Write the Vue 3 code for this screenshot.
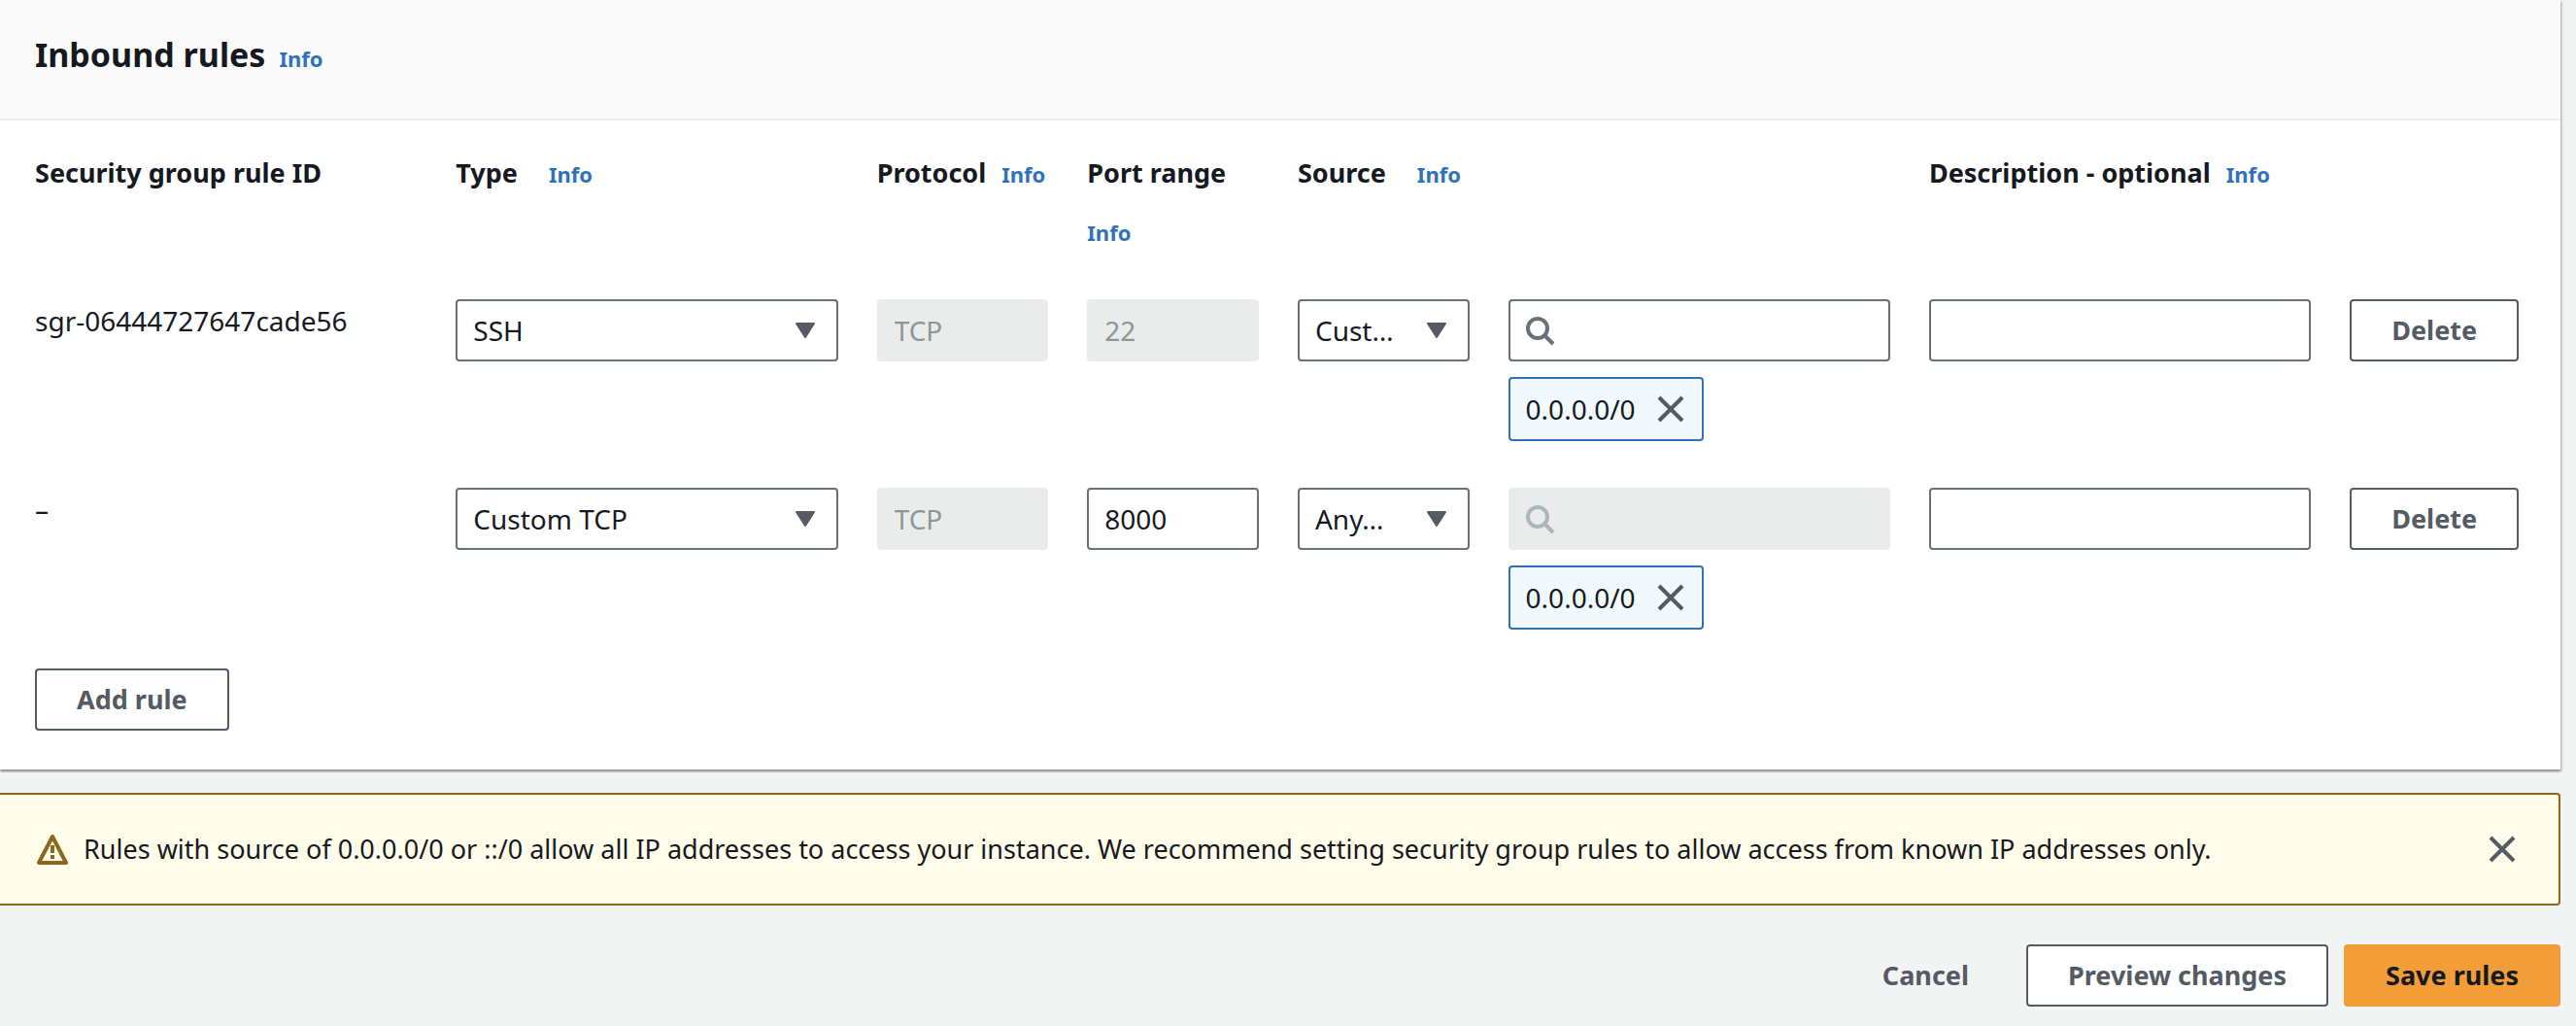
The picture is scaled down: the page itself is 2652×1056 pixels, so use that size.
<script setup>
import { ref } from 'vue'

const rules = ref([
  { id: 'sgr-06444727647cade56', type: 'SSH', protocol: 'TCP', port: '22', portLocked: true, source: 'Cust…', searchLocked: false, cidr: '0.0.0.0/0', description: '' },
  { id: '–', type: 'Custom TCP', protocol: 'TCP', port: '8000', portLocked: false, source: 'Any…', searchLocked: true, cidr: '0.0.0.0/0', description: '' },
])
</script>

<template>
  <main class="page">
    <section class="card">
      <header class="card-header">
        <h2 class="title">Inbound rules</h2>
        <a class="info" href="#">Info</a>
      </header>

      <div class="card-body">
        <table class="rules">
          <colgroup>
            <col v-for="n in 12" :key="n" />
          </colgroup>
          <thead>
            <tr>
              <th colspan="2" scope="col">Security group rule ID</th>
              <th colspan="2" scope="col"><span class="label wide">Type</span><a class="info" href="#">Info</a></th>
              <th scope="col"><span class="label">Protocol</span><a class="info" href="#">Info</a></th>
              <th scope="col" class="stacked"><span class="label">Port range</span><a class="info" href="#">Info</a></th>
              <th colspan="3" scope="col"><span class="label wide">Source</span><a class="info" href="#">Info</a></th>
              <th colspan="2" scope="col"><span class="label">Description - optional</span><a class="info" href="#">Info</a></th>
              <td></td>
            </tr>
          </thead>
          <tbody>
            <tr v-for="(rule, i) in rules" :key="i">
              <td colspan="2">{{ rule.id }}</td>
              <td colspan="2">
                <div class="field">
                  <select class="control" aria-label="Type">
                    <option>{{ rule.type }}</option>
                  </select>
                  <svg class="caret" viewBox="0 0 20 16" aria-hidden="true"><path d="M1 1H19L10 15Z" /></svg>
                </div>
              </td>
              <td><input v-model="rule.protocol" class="control" type="text" aria-label="Protocol" disabled /></td>
              <td><input v-model="rule.port" class="control" type="text" aria-label="Port range" :disabled="rule.portLocked" /></td>
              <td>
                <div class="field">
                  <select class="control" aria-label="Source type">
                    <option>{{ rule.source }}</option>
                  </select>
                  <svg class="caret" viewBox="0 0 20 16" aria-hidden="true"><path d="M1 1H19L10 15Z" /></svg>
                </div>
              </td>
              <td colspan="2">
                <div class="field">
                  <input class="control search" type="search" aria-label="Source" :disabled="rule.searchLocked" />
                  <svg class="glass" :class="{ muted: rule.searchLocked }" viewBox="0 0 32 32" aria-hidden="true">
                    <circle cx="14" cy="14" r="10" />
                    <path d="M21 21L30 30" />
                  </svg>
                </div>
                <div class="token">
                  <span>{{ rule.cidr }}</span>
                  <button class="icon-button" type="button" aria-label="Remove source">
                    <svg class="cross" viewBox="0 0 28 28" aria-hidden="true"><path d="M2 2L26 26M26 2L2 26" /></svg>
                  </button>
                </div>
              </td>
              <td colspan="2"><input v-model="rule.description" class="control" type="text" aria-label="Description" /></td>
              <td><button class="button" type="button">Delete</button></td>
            </tr>
          </tbody>
        </table>
        <button class="button" type="button">Add rule</button>
      </div>
    </section>

    <div class="alert" role="alert">
      <svg class="warning" viewBox="0 0 32 32" aria-hidden="true">
        <path class="outline" d="M16 3L30 30H2Z" />
        <path class="mark" d="M16 12V20M16 22V26" />
      </svg>
      <p class="alert-text">Rules with source of 0.0.0.0/0 or ::/0 allow all IP addresses to access your instance. We recommend setting security group rules to allow access from known IP addresses only.</p>
      <button class="icon-button" type="button" aria-label="Dismiss">
        <svg class="cross" viewBox="0 0 28 28" aria-hidden="true"><path d="M2 2L26 26M26 2L2 26" /></svg>
      </button>
    </div>

    <footer class="actions">
      <button class="button link" type="button">Cancel</button>
      <button class="button" type="button">Preview changes</button>
      <button class="button primary" type="button">Save rules</button>
    </footer>
  </main>
</template>

<style>
body {
  margin: 0;
  background: #f2f3f3;
}
</style>

<style scoped>
.page,
.page * {
  box-sizing: border-box;
}

.page {
  padding: 0 16px 20px 0;
  color: #16191f;
  font-family: "Noto Sans", "Open Sans", sans-serif;
  font-size: 28px;
  line-height: 44px;
}

.card {
  background: #fff;
  box-shadow: 0 2px 2px #879596, 2px 2px 2px rgba(0, 28, 36, 0.15);
}

.card-header {
  display: flex;
  align-items: baseline;
  gap: 14px;
  padding: 34px 36px 44px;
  background: #fafafa;
  border-bottom: 2px solid #eaeded;
}

.title {
  margin: 0;
  font-size: 34px;
  font-weight: 700;
  line-height: 44px;
}

.info {
  color: #3072b8;
  font-size: 22px;
  font-weight: 700;
  line-height: 24px;
  text-decoration: none;
}

.card-body {
  padding: 24px 0 40px 36px;
}

.rules {
  width: 100%;
  table-layout: fixed;
  border-collapse: collapse;
}

.rules th,
.rules td {
  padding: 0 40px 0 0;
  text-align: left;
  vertical-align: top;
}

.rules th {
  padding: 0 0 40px;
  font-size: 27px;
  line-height: 60px;
  white-space: nowrap;
}

.rules tbody td {
  padding-bottom: 48px;
}

.rules tbody tr:last-child td {
  padding-bottom: 40px;
}

.label {
  margin-right: 16px;
}

.label.wide {
  margin-right: 32px;
}

.stacked .label {
  display: block;
}

.field {
  position: relative;
}

.control {
  display: block;
  width: 100%;
  height: 64px;
  margin: 0;
  padding: 0 16px;
  appearance: none;
  background: #fff;
  border: 2px solid #687078;
  border-radius: 4px;
  color: #16191f;
  font: inherit;
}

.control:disabled {
  background: #eaecec;
  border-color: #eaecec;
  color: #8c9796;
  opacity: 1;
}

.control.search {
  padding-left: 60px;
}

.caret {
  position: absolute;
  top: 24px;
  right: 24px;
  width: 20px;
  height: 16px;
  fill: #545b64;
  stroke: #545b64;
  stroke-width: 2;
  stroke-linejoin: round;
  pointer-events: none;
}

.glass {
  position: absolute;
  top: 16px;
  left: 16px;
  width: 32px;
  height: 32px;
  fill: none;
  stroke: #687078;
  stroke-width: 4;
  pointer-events: none;
}

.glass.muted {
  stroke: #aab7b8;
}

.token {
  display: inline-flex;
  align-items: center;
  gap: 22px;
  height: 66px;
  margin-top: 16px;
  padding: 0 18px 0 16px;
  background: #f2f9fd;
  border: 2px solid #3072b8;
  border-radius: 4px;
  vertical-align: top;
}

.icon-button {
  display: flex;
  padding: 0;
  background: none;
  border: 0;
}

.cross {
  width: 28px;
  height: 28px;
  fill: none;
  stroke: #545b64;
  stroke-width: 4;
}

.button {
  height: 64px;
  padding: 0 41px;
  background: #fff;
  border: 2px solid #545b64;
  border-radius: 4px;
  color: #545b64;
  font: inherit;
  font-size: 27px;
  font-weight: 700;
  white-space: nowrap;
}

.button.link {
  background: transparent;
  border-color: transparent;
}

.button.primary {
  background: #f29d38;
  border-color: #f29d38;
  color: #16191f;
}

.alert {
  display: flex;
  align-items: center;
  gap: 16px;
  margin-top: 24px;
  padding: 34px 44px 34px 38px;
  background: #fffdea;
  border: 2px solid #8a6820;
  border-left: 0;
  border-radius: 0 4px 4px 0;
}

.warning {
  flex: none;
  width: 32px;
  height: 32px;
  fill: none;
  stroke: #8a6820;
  stroke-width: 4;
}

.warning .outline {
  stroke-linejoin: round;
}

.alert-text {
  flex: 1;
  margin: 0;
  font-size: 27px;
}

.actions {
  display: flex;
  justify-content: flex-end;
  gap: 16px;
  margin-top: 40px;
}
</style>
